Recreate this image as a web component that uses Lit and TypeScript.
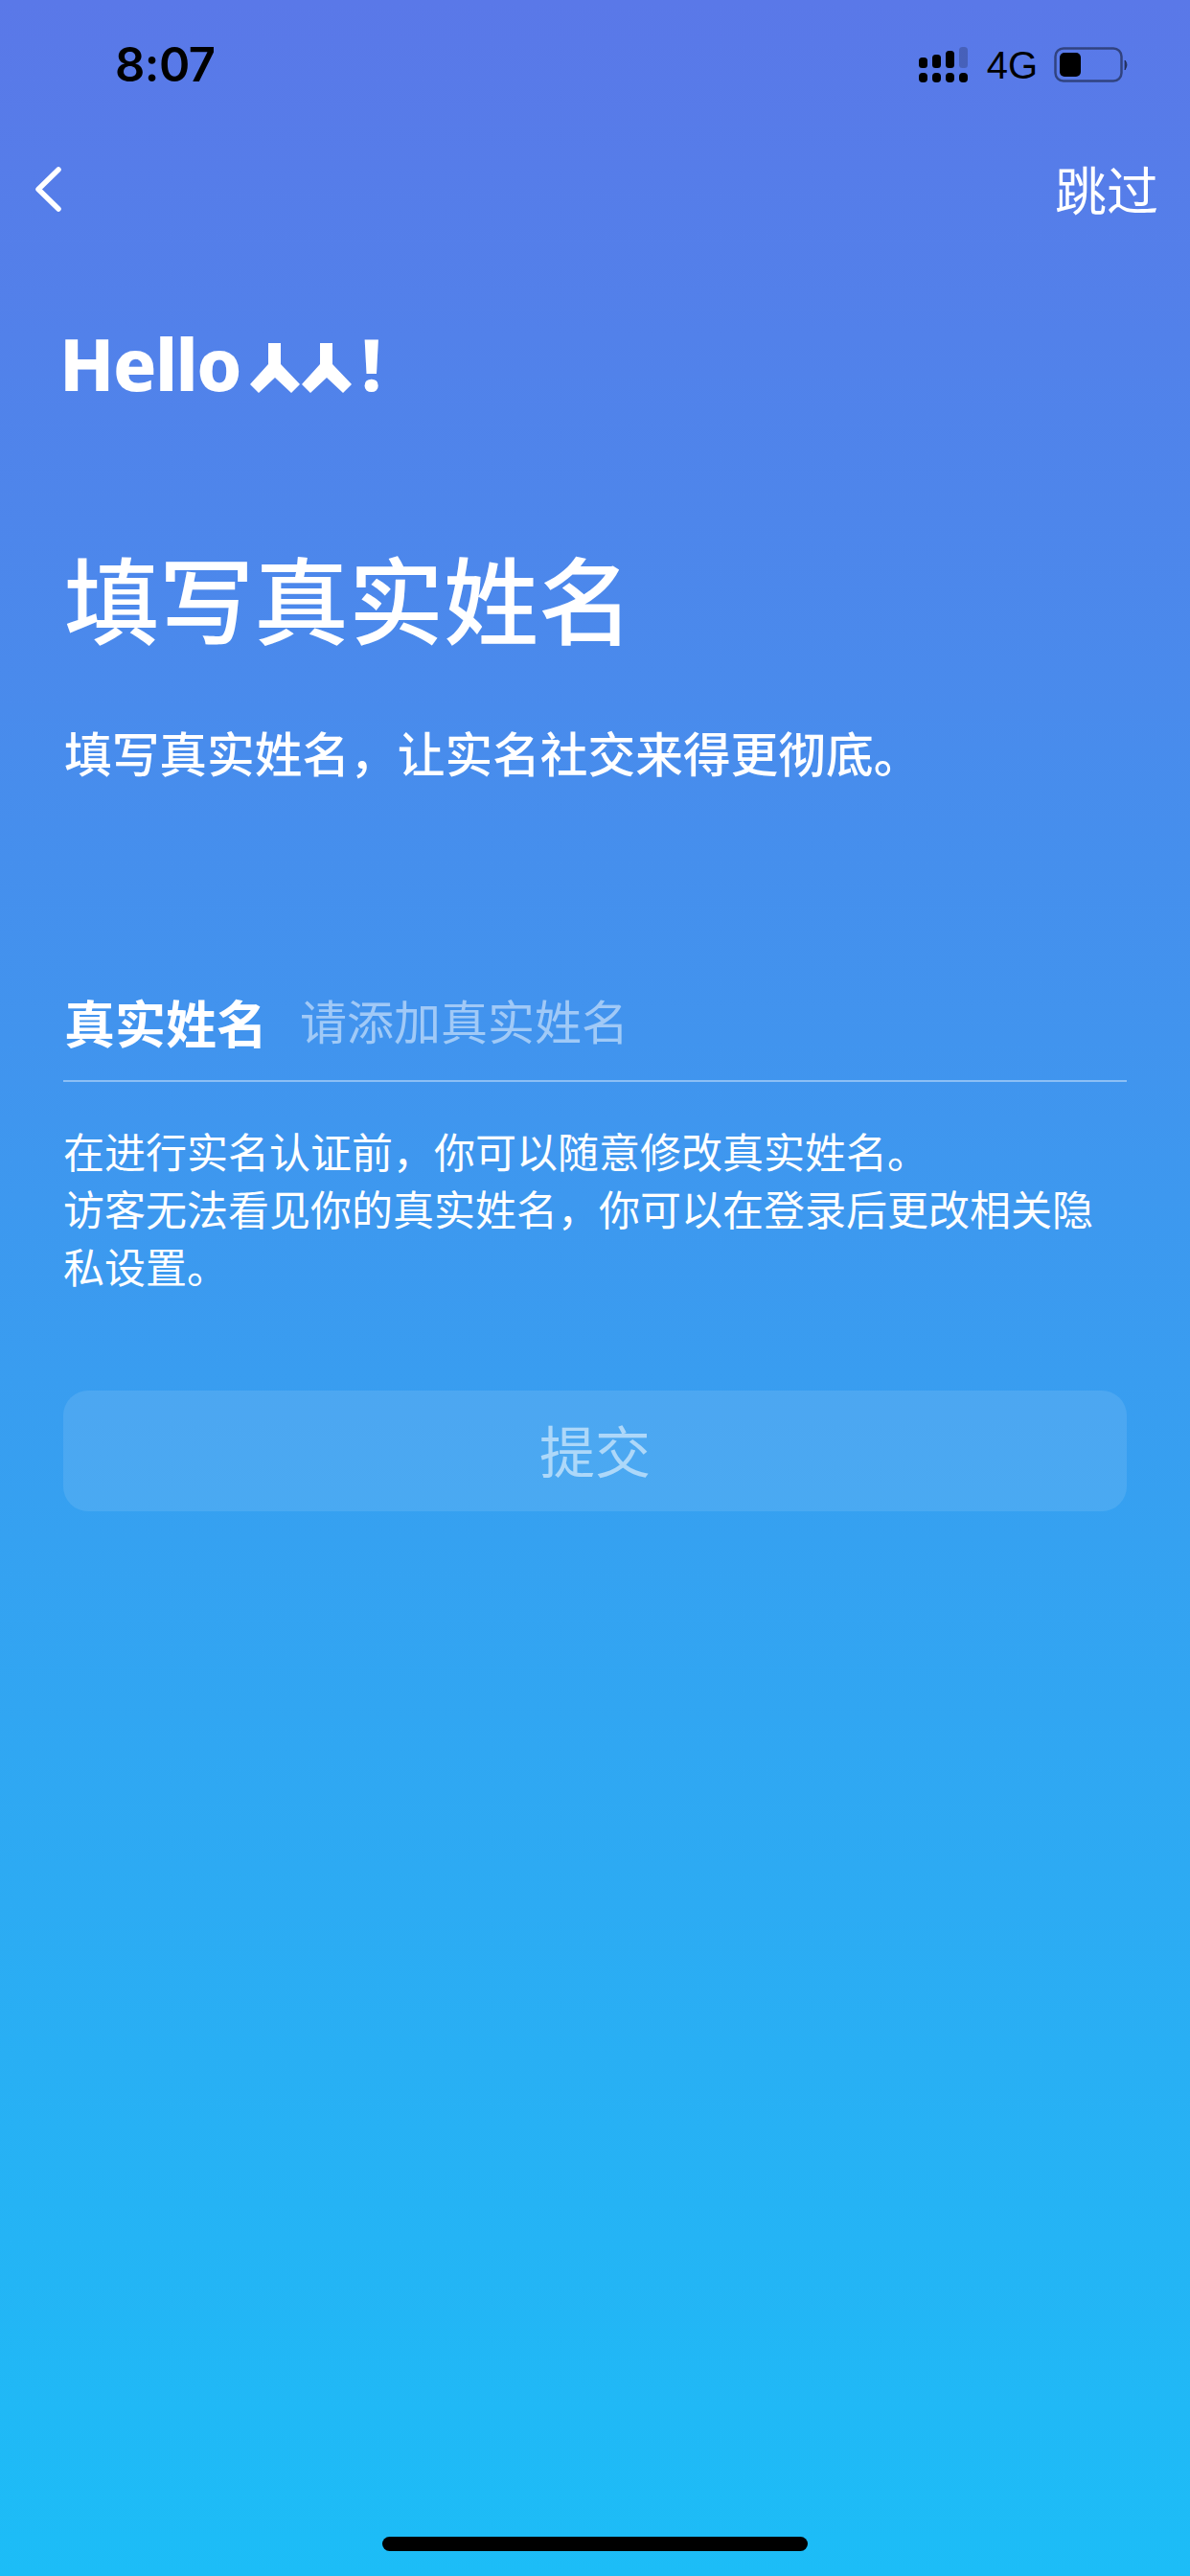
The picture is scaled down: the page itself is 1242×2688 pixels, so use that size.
import { LitElement, html, css } from "lit";
import { customElement } from "lit/decorators.js";

@customElement("app-root")
export class AppRoot extends LitElement {
  static styles = css`
    :host { display: block; width: 1242px; height: 2688px; overflow: hidden; }
    .page {
      box-sizing: border-box; width: 1242px; height: 2688px; display: flex; flex-direction: column;
      background: linear-gradient(180deg, #5a78e8 0%, #1cbdf7 100%);
      color: #fff; font-family: "Noto Sans CJK SC", "Noto Sans", sans-serif;
      position: relative;
    }
    .status { height: 132px; padding: 3px 0 0 120px; flex: none; display: flex; align-items: center; box-sizing: border-box; color: #000; }
    .time { font: 600 49px/1 Inter, "Liberation Sans", sans-serif; letter-spacing: -0.5px; }
    .status-right { margin-left: auto; display: flex; align-items: center; }
    .net { font: 400 40px/1 "Liberation Sans", sans-serif; margin: 0 17px 0 19px; }
    .batt { margin-right: 62px; }
    .nav { height: 132px; flex: none; display: flex; align-items: center; justify-content: space-between; padding: 0 33px 0 36px; }
    .skip { font-size: 54px; line-height: 1; margin-top: -2px; }
    .back { margin-top: -2px; }
    .logo { flex: none; margin: 82px 0 0 62px; display: flex; align-items: flex-end; height: 66px; }
    .logo-text { font: 800 75px/66px "Noto Sans", sans-serif; letter-spacing: -1.5px; }
    .people { margin-left: 10px; margin-bottom: 2px; }
    .bang { margin-left: 10px; }
    .title { margin: 150px 0 0 67px; font-size: 99px; line-height: 120px; font-weight: 500; }
    .sub { margin: 67px 0 0 67px; font-size: 49.7px; line-height: 70px; font-weight: 500; }
    .field { margin: 190px 66px 0; height: 120px; box-sizing: border-box; border-bottom: 2px solid rgba(255,255,255,.4); display: flex; align-items: center; padding-bottom: 4px; }
    .label { font-size: 53px; font-weight: 700; width: 247px; flex: none; padding-left: 1px; box-sizing: border-box; }
    .ph { font-size: 49px; color: rgba(255,255,255,.5); margin-top: -6px; }
    .help { margin: 41px 66px 0; font-size: 43px; line-height: 60px; }
    .btn { margin: 101px 66px 0; height: 126px; border-radius: 26px; background: rgba(255,255,255,.1); display: flex; align-items: center; justify-content: center; font-size: 58px; color: rgba(255,255,255,.55); }
    .btn span { margin-top: -4px; }
    .home { position: absolute; left: 399px; top: 2647px; width: 444px; height: 15px; border-radius: 8px; background: #000; }
  `;
  render() {
    return html`<div class="page">
      <div class="status">
        <span class="time">8:07</span>
        <div class="status-right">
          <svg width="52" height="38" viewBox="0 0 52 38">
            <g fill="#000">
              <rect x="0" y="11" width="9" height="11" rx="3.5"/><rect x="14" y="8" width="9" height="14" rx="3.5"/><rect x="28" y="4" width="9" height="18" rx="3.5"/>
              <rect x="42" y="0" width="9" height="22" rx="3.5" fill-opacity=".2"/>
              <rect x="0" y="27" width="9" height="10" rx="4"/><rect x="14" y="27" width="9" height="10" rx="4"/><rect x="28" y="27" width="9" height="10" rx="4"/><rect x="42" y="27" width="9" height="10" rx="4"/>
            </g>
          </svg>
          <span class="net">4G</span>
          <svg class="batt" width="80" height="38" viewBox="0 0 80 38">
            <rect x="1.500" y="1.500" width="69" height="34" rx="8.500" fill="none" stroke="#000" stroke-opacity=".45" stroke-width="2.500"/>
            <rect x="6" y="6" width="22" height="25" rx="5" fill="#000"/>
            <path d="M74 14 Q78 18 74 24Z" fill="#000" fill-opacity=".45" stroke="#000" stroke-opacity=".45"/>
          </svg>
        </div>
      </div>
      <div class="nav">
        <svg class="back" width="30" height="48" viewBox="0 0 30 48"><path d="M25 4 L4 24.500 L25 45" fill="none" stroke="#fff" stroke-width="5.500" stroke-linecap="round" stroke-linejoin="round"/></svg>
        <span class="skip">跳过</span>
      </div>
      <div class="logo">
        <span class="logo-text">Hello</span>
        <svg class="people" width="106" height="52" viewBox="0 0 106 52">
          <path fill="#fff" d="M19 0H32V22L52 43 43 52 26 36 9 52 0 43 19 22Z"/>
          <path fill="#fff" d="M73 0H86V22L106 43 97 52 80 36 63 52 54 43 73 22Z"/>
        </svg>
        <span class="logo-text bang">!</span>
      </div>
      <div class="title">填写真实姓名</div>
      <div class="sub">填写真实姓名，让实名社交来得更彻底。</div>
      <div class="field"><span class="label">真实姓名</span><span class="ph">请添加真实姓名</span></div>
      <div class="help">在进行实名认证前，你可以随意修改真实姓名。<br>访客无法看见你的真实姓名，你可以在登录后更改相关隐私设置。</div>
      <div class="btn"><span>提交</span></div>
      <div class="home"></div>
    </div>`;
  }
}
